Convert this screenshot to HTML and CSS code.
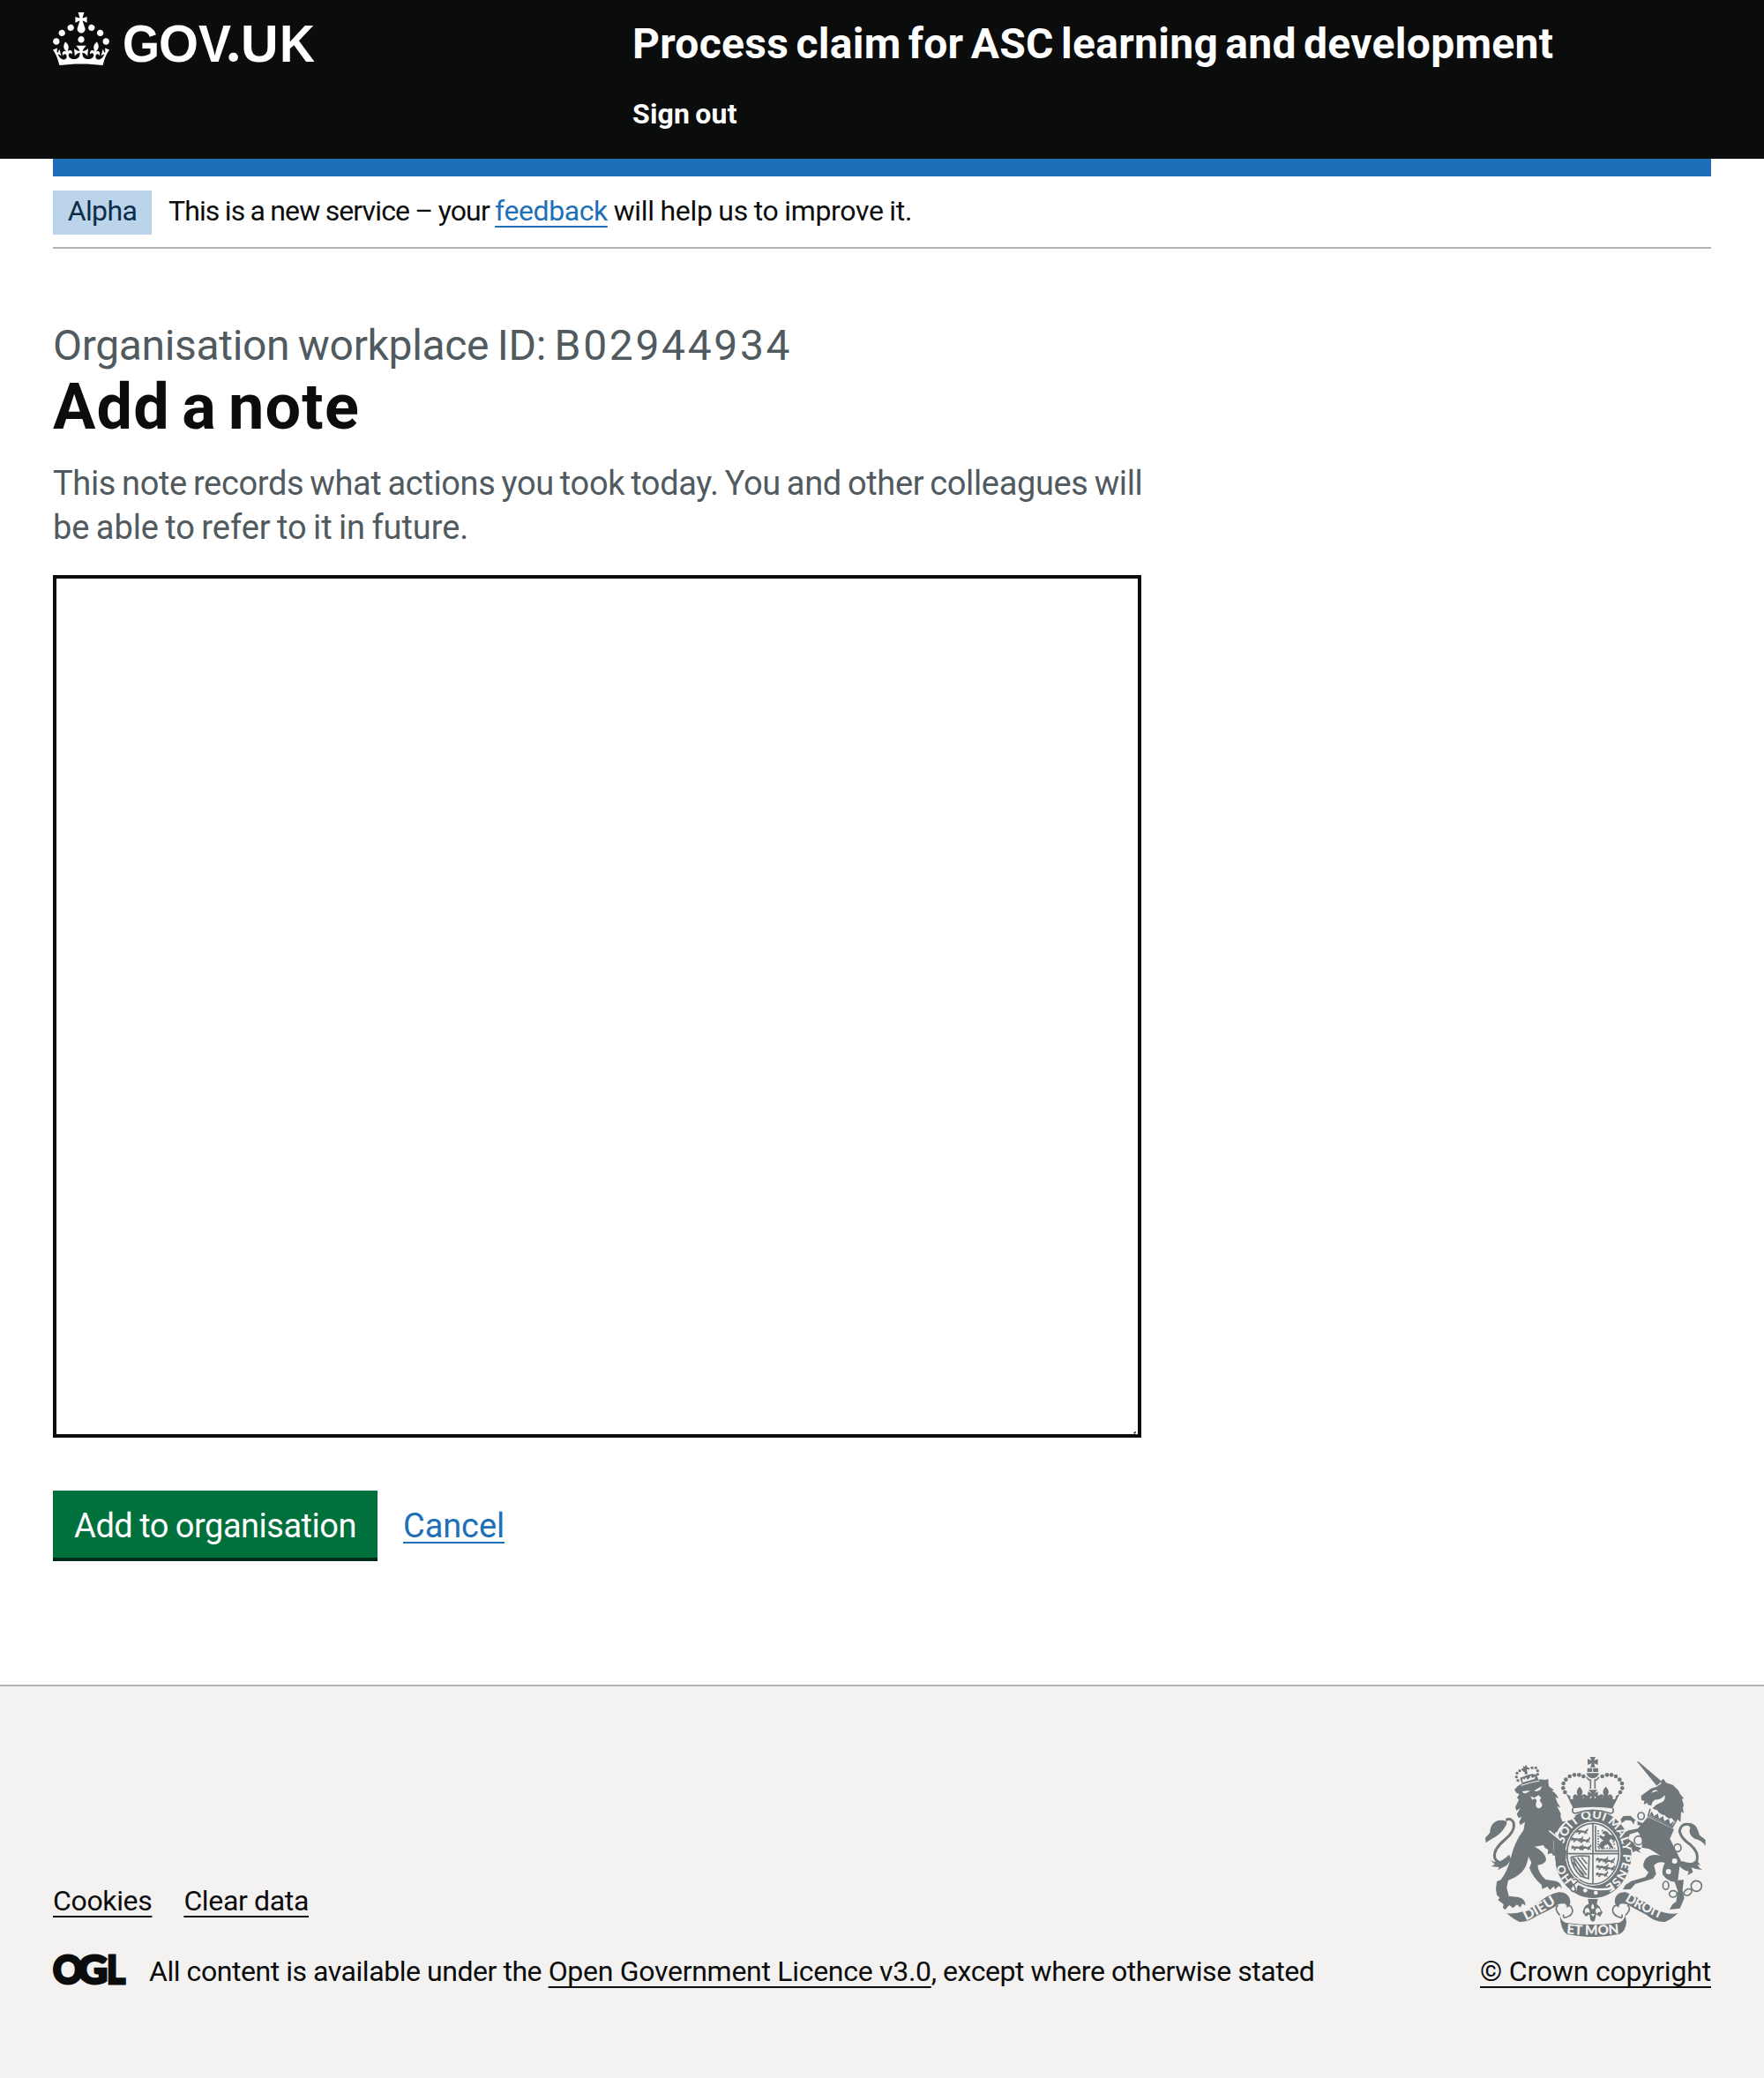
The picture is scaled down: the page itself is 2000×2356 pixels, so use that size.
FILE: index.html
```html
<!DOCTYPE html>
<html lang="en">
<head>
<meta charset="utf-8">
<title>Add a note – Process claim for ASC learning and development</title>
<link rel="stylesheet" href="styles.css">
</head>
<body>
<header class="header">
  <a class="header-logo" href="#" aria-label="GOV.UK">
    <svg class="crown" viewBox="0 0 32 30" fill="currentColor" aria-hidden="true">
      <defs><path id="crown-half" d="M15.9 29.2H16c4.4 0 8.6.3 12.3.8 1.1-4.5 2.4-7 3.7-8.8l-2.5-.9c.2 1.3.3 1.9 0 2.7-.4-.4-.8-1.1-1.1-2.3l-1.2 4c.7-.5 1.3-.8 2-.9-1.1 2.5-2.6 3.1-3.5 3-1.1-.2-1.7-1.2-1.5-2.1.3-1.2 1.5-1.5 2.1-.1 1.1-2.3-.8-3-2-2.3 1.9-1.9 2.1-3.5.6-5.6-2.1 1.6-2.1 3.2-1.2 5.5-1.2-1.4-3.2-.6-2.5 1.6.9-1.4 2.1-.5 1.9.8-.2 1.1-1.7 2.1-3.5 1.9-2.7-.2-2.9-2.1-2.9-3.6.7-.1 1.9.5 2.9 1.9l.4-4.3c-1.1 1.1-2.1 1.4-3.2 1.4.4-1.2 2.1-3 2.1-3H15.9z"/></defs>
      <path d="M22.6 10.4c-1 .4-2-.1-2.4-1-.4-.9.1-2 1-2.4.9-.4 2 .1 2.4 1s-.1 2-1 2.4m-5.9 6.7c-.9.4-2-.1-2.4-1-.4-.9.1-2 1-2.4.9-.4 2 .1 2.4 1s-.1 2-1 2.4m10.8-3.7c-1 .4-2-.1-2.4-1-.4-.9.1-2 1-2.4.9-.4 2 .1 2.4 1s0 2-1 2.4m3.3 4.8c-1 .4-2-.1-2.4-1-.4-.9.1-2 1-2.4.9-.4 2 .1 2.4 1s-.1 2-1 2.4M17 4.7l2.3 1.2V2.5l-2.3.7-.2-.2.9-3h-3.4l.9 3-.2.2c-.1.1-2.3-.7-2.3-.7v3.4L15 4.7c.1.1.1.2.2.2l-1.3 4c-.1.2-.1.4-.1.6 0 1.1.8 2 1.9 2.2h.7c1-.2 1.9-1.1 1.9-2.1 0-.2 0-.4-.1-.6l-1.3-4c-.1-.2 0-.2.1-.3m-7.6 5.7c.9.4 2-.1 2.4-1 .4-.9-.1-2-1-2.4-.9-.4-2 .1-2.4 1s0 2 1 2.4m-5 3c.9.4 2-.1 2.4-1 .4-.9-.1-2-1-2.4-.9-.4-2 .1-2.4 1s.1 2 1 2.4m-3.2 4.8c.9.4 2-.1 2.4-1 .4-.9-.1-2-1-2.4-.9-.4-2 .1-2.4 1s0 2 1 2.4"/>
      <use href="#crown-half"/><use href="#crown-half" transform="translate(32 0) scale(-1 1)"/>
    </svg>
    <svg class="wordmark" viewBox="0 0 220 60"><text y="56" fill="currentColor"><tspan x="1" textLength="42" lengthAdjust="spacingAndGlyphs">G</tspan><tspan x="42" textLength="45" lengthAdjust="spacingAndGlyphs">O</tspan><tspan x="87" textLength="37" lengthAdjust="spacingAndGlyphs">V</tspan><tspan class="wordmark-dot" x="119">.</tspan><tspan x="135">U</tspan><tspan x="179" textLength="40" lengthAdjust="spacingAndGlyphs">K</tspan></text></svg>
  </a>
  <div class="header-content">
    <a class="header-service" href="#">Process claim for ASC learning and development</a>
    <nav class="header-nav"><a href="#">Sign out</a></nav>
  </div>
</header>

<div class="container">
  <div class="header-bar"></div>
  <div class="phase">
    <strong class="tag">Alpha</strong>
    <p class="phase-text"><span class="phase-lead">This is a new service – your </span><a class="link" href="#">feedback</a> will help us to improve it.</p>
  </div>
  <main class="main">
    <form class="form">
      <span class="caption">Organisation workplace ID: <span class="caption-id">B02944934</span></span>
      <h1 class="title"><label for="note">Add a note</label></h1>
      <p class="hint"><span class="hint-first">This note records what actions you took today. You and other colleagues will</span> <span class="hint-last">be able to refer to it in future.</span></p>
      <div class="field">
        <textarea class="textarea" id="note"></textarea>
        <svg class="grip" viewBox="0 0 5 5" aria-hidden="true"><path d="M1 1h2v1H1zM0 2h3v1H0zM1 3h1v1H1zM3 4h1v1H3z"/></svg>
      </div>
      <div class="actions">
        <button class="button" type="button">Add to organisation</button>
        <a class="link cancel" href="#">Cancel</a>
      </div>
    </form>
  </main>
</div>

<footer class="footer">
  <div class="footer-meta">
    <nav class="footer-links"><a class="footer-link" href="#">Cookies</a><a class="footer-link" href="#">Clear data</a></nav>
    <div class="licence">
      <svg class="ogl" viewBox="0 0 82 36" role="img"><text y="34"><tspan x="0" textLength="34" lengthAdjust="spacingAndGlyphs">O</tspan><tspan x="28" textLength="34" lengthAdjust="spacingAndGlyphs">G</tspan><tspan x="61" textLength="21" lengthAdjust="spacingAndGlyphs">L</tspan></text></svg>
      <p class="licence-text">All content is available under the <a class="footer-link" href="#">Open Government Licence v3.0</a>, except where otherwise stated</p>
    </div>
  </div>
  <a class="copyright" href="#">
    <svg class="crest" viewBox="72 66 750 612" aria-hidden="true">
      <defs>
        <path id="garter-main" d="M335 395A103 119 0 0 1 541 395A103 119 0 0 1 438 514"/>
        <path id="garter-left" d="M370 484A103 119 0 0 1 335 395"/>
        <path id="scroll-left" d="M210 622Q262 599 330 552"/>
        <path id="scroll-mid" d="M340 666Q438 678 545 664"/>
        <path id="scroll-right" d="M546 556Q600 588 690 626"/>
        <g id="fleur"><path d="M0-29C-15-13-9-7-5 3C-13-7-25-2-20 9C-15 2-10 5-11 12L-13 20H13L11 12C10 5 15 2 20 9C25-2 13-7 5 3C9-7 15-13 0-29Z"/></g>
        <g id="leopard"><path d="M0 5L7 0L13 4L20 3L29 6L37 2L42-5L43 3L38 9L42 17L35 13L31 17L28 11L18 11L14 17L8 16L12 10L4 11L0 14L3 8Z"/></g>
      </defs>
      <!-- Lion -->
      <g class="ink">
        <path d="M171 178L180 167L190 160Q230 151 260 142L276 144L286 141L288 166L305 178L299 182Q313 188 321 207L310 203Q316 222 328 238L316 234L329 259L328 268L334 286L346 285Q322 302 311 333L324 344Q340 361 348 388L346 414L337 410L333 425L325 420L321 428L310 416L313 400L303 402L298 393L284 397L286 382L275 375L270 366L240 371Q278 391 279 416Q274 431 250 434Q252 461 277 483L303 487Q328 488 333 513L322 505L309 517L306 506L291 518L284 507L265 515L264 502Q234 476 222 444L229 425L219 405Q214 432 205 446Q190 470 150 486L145 510L152 539L185 543Q208 549 209 571L198 565L191 578L180 568L166 580L154 570L139 586L132 579L134 567L115 553L121 545L111 535L108 515L111 490L125 484Q146 458 159 408Q171 355 202 315L207 287L191 298L187 287L196 270L186 274L179 261L191 239L178 249L174 237L186 212L180 204L188 193L178 188Z"/>
        <path d="M198 162L190 137L204 132L217 127L231 124L246 126L255 149Q229 151 198 162Z"/>
        <g class="beads"><circle cx="183" cy="146" r="5"/><circle cx="178" cy="134" r="5"/><circle cx="180" cy="121" r="5"/><circle cx="189" cy="113" r="5"/><circle cx="206" cy="112" r="6"/><circle cx="231" cy="103" r="5"/><circle cx="244" cy="103" r="5"/><circle cx="250" cy="113" r="5"/><circle cx="250" cy="125" r="5"/></g>
        <path d="M200 96l7 4 2-6 5 2 1 6 7 0 0 7-9 0 3 15-9 2-2-14-8 1-2-7 7-2z"/>
        <path d="M144 284C103 272 88 300 88 323L72 342L74 358C94 341 125 336 145 293Z"/>
        <path d="M89 417L101 422Q125 427 153 398L160 415L145 435L114 451L119 441L92 438L105 431Z"/>
      </g>
      <g class="paper"><path d="M197 183L224 180Q213 193 202 189ZM238 181L264 166Q262 181 246 183Z"/><path d="M225 200L239 205L253 196L262 205L257 214L266 228Q263 241 252 241Q243 238 244 226L247 213L239 207L233 212Z"/><path d="M198 139l8 4 4-9 5 9 8-5 3-9 6 9 10-6-2 9-41 12z"/></g>
      <path class="cut thin" d="M194 163Q230 151 256 147"/>
      <path class="line wide" d="M142 280Q163 272 169 292Q174 319 138 348Q98 381 104 409Q112 432 143 421"/>
      <!-- Unicorn -->
      <g class="ink">
        <path d="M588 82L593 82L672 149L655 164Z"/>
        <path d="M655 167L670 157L670 148L678 140L687 154L710 161L729 180L735 193L747 207L741 209L747 229L744 240L747 258L738 252L736 287L726 278L720 290L705 273L693 279L682 263L668 266L657 247L641 242Q650 227 670 221Q687 214 682 196Q670 213 650 211Q635 222 638 232L625 229L624 222L611 228L613 215L603 213L602 198L636 173Z"/>
        <path d="M625 270L714 312L700 344L721 386L736 416L732 447L727 485L747 484L743 518L749 546L734 581L699 585L708 568L721 559L727 523L716 491Q692 490 675 466Q672 447 683 426Q660 419 646 435L653 465L642 480L582 498L566 516L540 517L549 501L569 488L616 475L627 459L610 440Q607 416 630 403Q650 395 669 403L630 379L604 374L608 349L591 320L563 329L559 346L575 356L584 370L603 376L594 383L601 393L584 385L575 391L566 368L544 347L544 325L559 316L590 310L600 299L576 294L568 283L550 281L536 291L532 278L542 267L566 266L585 283L607 291Z"/>
        <path d="M748 293Q786 285 795 315L801 332L821 348L821 368Q806 347 784 344Q760 330 769 306L762 298Z"/>
        <path d="M725 405Q750 440 778 429L792 418L804 435L793 431Q798 444 811 451L785 446L773 442L778 458L760 469L764 455Q739 451 724 425Z"/>
      </g>
      <path class="line wide" d="M773 297Q737 287 733 320Q739 344 769 364Q799 389 792 419Q775 440 741 424"/>
      <path class="paper" d="M634 240L720 288L710 308L624 267Z"/>
      <path class="line" d="M633 242L626 266L708 306L719 287"/>
      <g class="ink"><path d="M630 264l9-13 7 17 13-10 4 18 14-9 4 17 15-8 5 18 13-11-7 21z"/></g>
      <path class="paper" d="M637 188Q646 174 660 181L650 184Z"/>
      <g class="chain"><ellipse cx="602" cy="267" rx="11" ry="12"/><ellipse cx="593" cy="350" rx="14" ry="15"/><ellipse cx="726" cy="375" rx="12" ry="13"/><ellipse cx="686" cy="503" rx="10" ry="14"/><ellipse cx="711" cy="532" rx="13" ry="11"/><ellipse cx="761" cy="526" rx="14" ry="10" transform="rotate(-30 761 526)"/><circle cx="790" cy="505" r="18"/></g>
      <g class="paper"><circle cx="716" cy="420" r="9"/><circle cx="695" cy="456" r="9"/><ellipse cx="584" cy="291" rx="6" ry="9"/></g>
      <!-- Shield and garter -->
      <ellipse class="ink" cx="438" cy="397" rx="131" ry="149"/>
      <ellipse class="paper" cx="438" cy="395" rx="94" ry="109"/>
      <ellipse class="line" cx="438" cy="395" rx="88" ry="103"/>
      <path class="line" d="M438 292V498M350 395H526M447 300V386H522M363 407Q389 400 425 404L423 480L397 472Q368 445 363 407M375 410L416 468M386 408L417 450M399 407L418 430M369 424L407 467M369 405Q380 445 412 478"/>
      <g class="ink">
        <use href="#leopard" x="379" y="312"/><use href="#leopard" x="362" y="339"/><use href="#leopard" x="363" y="367"/><use href="#leopard" x="386" y="342"/><use href="#leopard" x="390" y="367"/>
        <use href="#leopard" x="447" y="408"/><use href="#leopard" x="448" y="433"/><use href="#leopard" x="447" y="458"/><use href="#leopard" x="470" y="412"/><use href="#leopard" x="471" y="437"/>
        <path d="M457 370l9-16 8-3-14-12 2-8 13 7 5-9-11-2 6-10 13 3 5 9 13 4 9 12-5 9-9-11-8 8 8 11 7 14-11-1-8-12-11 4-6 14z"/>
      </g>
      <path class="line" d="M456 315V377H514M468 316Q505 332 512 369" stroke-dasharray="5 4"/>
      <g class="motto">
        <text><textPath href="#garter-main" startOffset="32" textLength="448" lengthAdjust="spacingAndGlyphs">SOIT QUI MALY PENSE</textPath></text>
        <text><textPath href="#garter-left" textLength="64" lengthAdjust="spacingAndGlyphs">HO</textPath></text>
      </g>
      <path class="cut" d="M313 322Q299 378 310 430"/>
      <path class="ink" d="M306 326L324 344Q340 361 348 388L346 414L337 410L333 425L325 420L321 428L310 416L313 400L303 402Z"/>
      <path class="cut" d="M289 317L329 350"/>
      <path class="cut wide" d="M388 497Q441 526 509 512"/>
      <g class="paper"><path d="M363 484Q378 469 391 481Q383 489 393 499Q380 505 384 519Q373 530 363 515L373 502Z"/><circle cx="412" cy="520" r="7"/><circle cx="448" cy="528" r="7"/></g>
      <path class="line" d="M370 484Q384 477 387 488L373 501L380 519Q367 530 363 515"/>
      <!-- Crown -->
      <path class="paper" d="M360 237H516V254L496 258Q438 240 379 258L360 254Z"/>
      <path class="line" d="M371 240Q363 254 377 258Q438 236 499 258Q513 254 505 240"/>
      <g class="ink">
        <path d="M360 218Q438 207 515 218L505 241Q438 231 371 241Z"/>
        <path d="M347 191L361 199L362 210L371 209L370 199L378 198L386 206L396 211L407 205L407 193L421 198L430 207L437 203L446 207L455 198L468 193L469 205L480 211L491 206L499 198L506 200L505 210L514 209L516 199L529 191L513 224H363Z"/>
        <use href="#fleur" x="393" y="196"/><use href="#fleur" x="482" y="196"/>
        <path d="M423 178H453L444 189L455 184V208L442 199L448 214H428L435 199L421 208V184L433 189Z"/>
        <path d="M428 66H447L442 78L455 73V93L442 88L446 101H429L434 88L420 93V73L433 78ZM419 104H456V117H419ZM416 121H459Q454 138 437 139Q420 138 416 121Z"/>
        <circle cx="406" cy="132" r="7"/><circle cx="391" cy="127" r="7"/><circle cx="375" cy="127" r="7"/><circle cx="359" cy="132" r="7"/><circle cx="346" cy="143" r="7"/><circle cx="338" cy="156" r="7"/><circle cx="337" cy="172" r="7"/><circle cx="343" cy="186" r="7"/>
        <circle cx="470" cy="132" r="7"/><circle cx="486" cy="127" r="7"/><circle cx="501" cy="127" r="7"/><circle cx="516" cy="132" r="7"/><circle cx="529" cy="143" r="7"/><circle cx="537" cy="156" r="7"/><circle cx="538" cy="172" r="7"/><circle cx="531" cy="186" r="7"/>
      </g>
      <path class="line" d="M430 142V174M445 142V174M416 135L427 146M459 135L448 146"/>
      <path class="cut thin" d="M437 103V117M437 142V174"/>
      <!-- Scroll -->
      <g class="ink">
        <path d="M421 549H455L451 566Q462 573 466 587L471 594L462 610L449 601L445 621Q438 632 430 621L426 601L414 609L403 594L408 580Q411 570 424 566Z"/>
        <path d="M145 598Q198 602 243 570Q285 532 322 526Q352 525 360 551Q365 572 348 580Q354 567 339 565Q321 563 310 575Q279 593 247 607Q217 629 188 627Q170 620 145 598Z"/>
        <path d="M727 598Q692 603 648 584Q600 545 549 526Q522 524 514 546Q507 566 526 579Q524 567 538 565Q555 565 565 574L620 603Q653 630 684 627Q703 620 727 598Z"/>
        <path d="M325 602Q330 623 344 629Q437 643 529 629Q546 620 548 603L552 628Q549 660 529 668Q438 688 349 669Q329 655 325 602Z"/>
      </g>
      <path class="line" d="M346 569Q365 568 369 588Q369 607 341 613Q335 610 339 602M320 571Q304 580 325 604M528 569Q508 568 505 585Q505 607 535 613Q540 610 536 602M555 570Q572 582 549 604"/>
      <g class="paper"><path d="M433 583Q431 572 437 565Q445 574 442 583ZM411 592Q409 581 420 579Q429 585 427 596L418 594L413 600ZM448 596Q445 583 454 579Q466 583 463 595L457 593L453 599ZM432 600H444L439 610Z"/></g>
      <g class="motto motto-scroll">
        <text><textPath href="#scroll-left" textLength="119" lengthAdjust="spacingAndGlyphs">DIEU</textPath></text>
        <text><textPath href="#scroll-mid" startOffset="8" textLength="180" lengthAdjust="spacingAndGlyphs">ET MON</textPath></text>
        <text><textPath href="#scroll-right" textLength="136" lengthAdjust="spacingAndGlyphs">DROIT</textPath></text>
      </g>
    </svg>
    <span class="copyright-text">© Crown copyright</span>
  </a>
</footer>
</body>
</html>
```
FILE: styles.css
```css
* { box-sizing: border-box; }

body {
  margin: 0;
  display: flex;
  flex-direction: column;
  min-height: 2356px;
  background: #fff;
  color: #0b0c0c;
  font-family: Roboto, "Noto Sans", sans-serif;
  font-size: 32px;
  line-height: 40px;
}

p, h1 { margin: 0; }
a { color: inherit; text-decoration: none; }
svg { display: block; }

/* Header */
.header {
  display: flex;
  height: 180px;
  padding: 0 60px;
  background: #0b0c0c;
  color: #fff;
}
.header-logo { display: flex; width: 657px; padding-top: 14px; }
.crown { width: 64px; height: 60px; }
.wordmark { width: 220px; height: 60px; margin-left: 14px; overflow: visible; }
.wordmark text { font: bold 59px "Liberation Sans", Arial, sans-serif; }
.wordmark .wordmark-dot { font-family: Lato, sans-serif; font-weight: 900; font-size: 64px; }
.header-content { display: flex; flex-direction: column; gap: 29px; padding-top: 20px; font-weight: 700; }
.header-service { font-size: 48px; line-height: 60px; letter-spacing: 0.29px; word-spacing: -4px; }
.header-nav { letter-spacing: 0.2px; word-spacing: -2px; }

/* Page */
.container { padding: 0 60px; }
.header-bar { height: 20px; background: #1d70b8; }
.phase {
  display: flex;
  align-items: baseline;
  gap: 19px;
  padding: 16px 0 14px;
  border-bottom: 2px solid #b1b4b6;
}
.tag {
  width: 112px;
  height: 50px;
  background: #bbd4ea;
  color: #0c2d4a;
  font-weight: 400;
  line-height: 46px;
  letter-spacing: -0.6px;
  text-align: center;
}
.phase-text { letter-spacing: -0.33px; word-spacing: -0.8px; }
.phase-lead { letter-spacing: -0.88px; }
.phase-text .link { letter-spacing: -0.42px; }
.link, .footer-link, .copyright-text {
  text-decoration: underline;
  text-decoration-thickness: 2px;
  text-decoration-skip-ink: none;
  text-underline-offset: 6px;
}
.link { color: #1d70b8; }

.main { padding: 80px 0 140px; }
.form { width: 1234px; }
.caption { display: block; color: #505a5f; font-size: 48px; line-height: 60px; letter-spacing: -0.33px; word-spacing: -2px; }
.caption-id { letter-spacing: 2.65px; }
.title { font-size: 72px; line-height: 80px; font-weight: 700; letter-spacing: 1.2px; word-spacing: -6px; }
.hint { margin: 21px 0 29px; color: #505a5f; font-size: 38px; line-height: 50px; }
.hint-first, .hint-last { display: block; white-space: nowrap; }
.hint-first { letter-spacing: -0.36px; word-spacing: -2px; }
.hint-last { letter-spacing: -0.05px; word-spacing: -2px; }
.field { position: relative; height: 978px; }
.textarea {
  display: block;
  width: 100%;
  height: 100%;
  padding: 10px;
  border: 4px solid #0b0c0c;
  border-radius: 0;
  background: #fff;
  font: inherit;
  resize: none;
}
.grip { position: absolute; right: 4px; bottom: 3px; width: 5px; height: 5px; fill: #606060; }
.actions { display: flex; align-items: baseline; gap: 29px; margin-top: 60px; font-size: 38px; }
.button {
  width: 368px;
  height: 76px;
  padding: 3px 0 0;
  border: 0;
  background: #00703c;
  box-shadow: 0 4px 0 #002d18;
  color: #fff;
  font: inherit;
  letter-spacing: -0.5px;
  word-spacing: -1px;
}
.cancel { letter-spacing: -0.1px; text-underline-offset: 5px; }

/* Footer */
.footer {
  display: flex;
  flex: 1;
  align-items: flex-start;
  justify-content: space-between;
  margin-top: 4px;
  padding: 80px 60px 0;
  border-top: 2px solid #b1b4b6;
  background: #f3f2f1;
}
.footer-meta { padding-top: 143px; }
.footer-links { display: flex; gap: 36px; letter-spacing: -0.35px; }
.licence { display: flex; align-items: flex-start; gap: 27px; margin-top: 40px; }
.ogl { width: 82px; height: 36px; overflow: visible; }
.ogl text { font: 900 44px Lato, sans-serif; fill: #0b0c0c; stroke: #0b0c0c; stroke-width: 3px; }
.licence-text { letter-spacing: -0.45px; }
.licence-text .footer-link { letter-spacing: -0.29px; }
.copyright { display: flex; flex-direction: column; align-items: center; gap: 19px; width: 262px; }
.copyright-text { letter-spacing: -0.18px; white-space: nowrap; }

/* Royal coat of arms */
.crest { width: 250px; height: 204px; }
.ink { fill: #6f777b; }
.paper { fill: #f3f2f1; }
.line, .chain { fill: none; stroke: #6f777b; stroke-width: 5px; }
.line.wide { stroke-width: 9px; }
.cut { fill: none; stroke: #f3f2f1; stroke-width: 5px; }
.cut.wide { stroke-width: 7px; }
.cut.thin { stroke-width: 3px; }
.motto { fill: #f3f2f1; font-family: Lato, sans-serif; font-size: 39px; font-weight: 900; }
.motto-scroll { font-size: 46px; }
```
